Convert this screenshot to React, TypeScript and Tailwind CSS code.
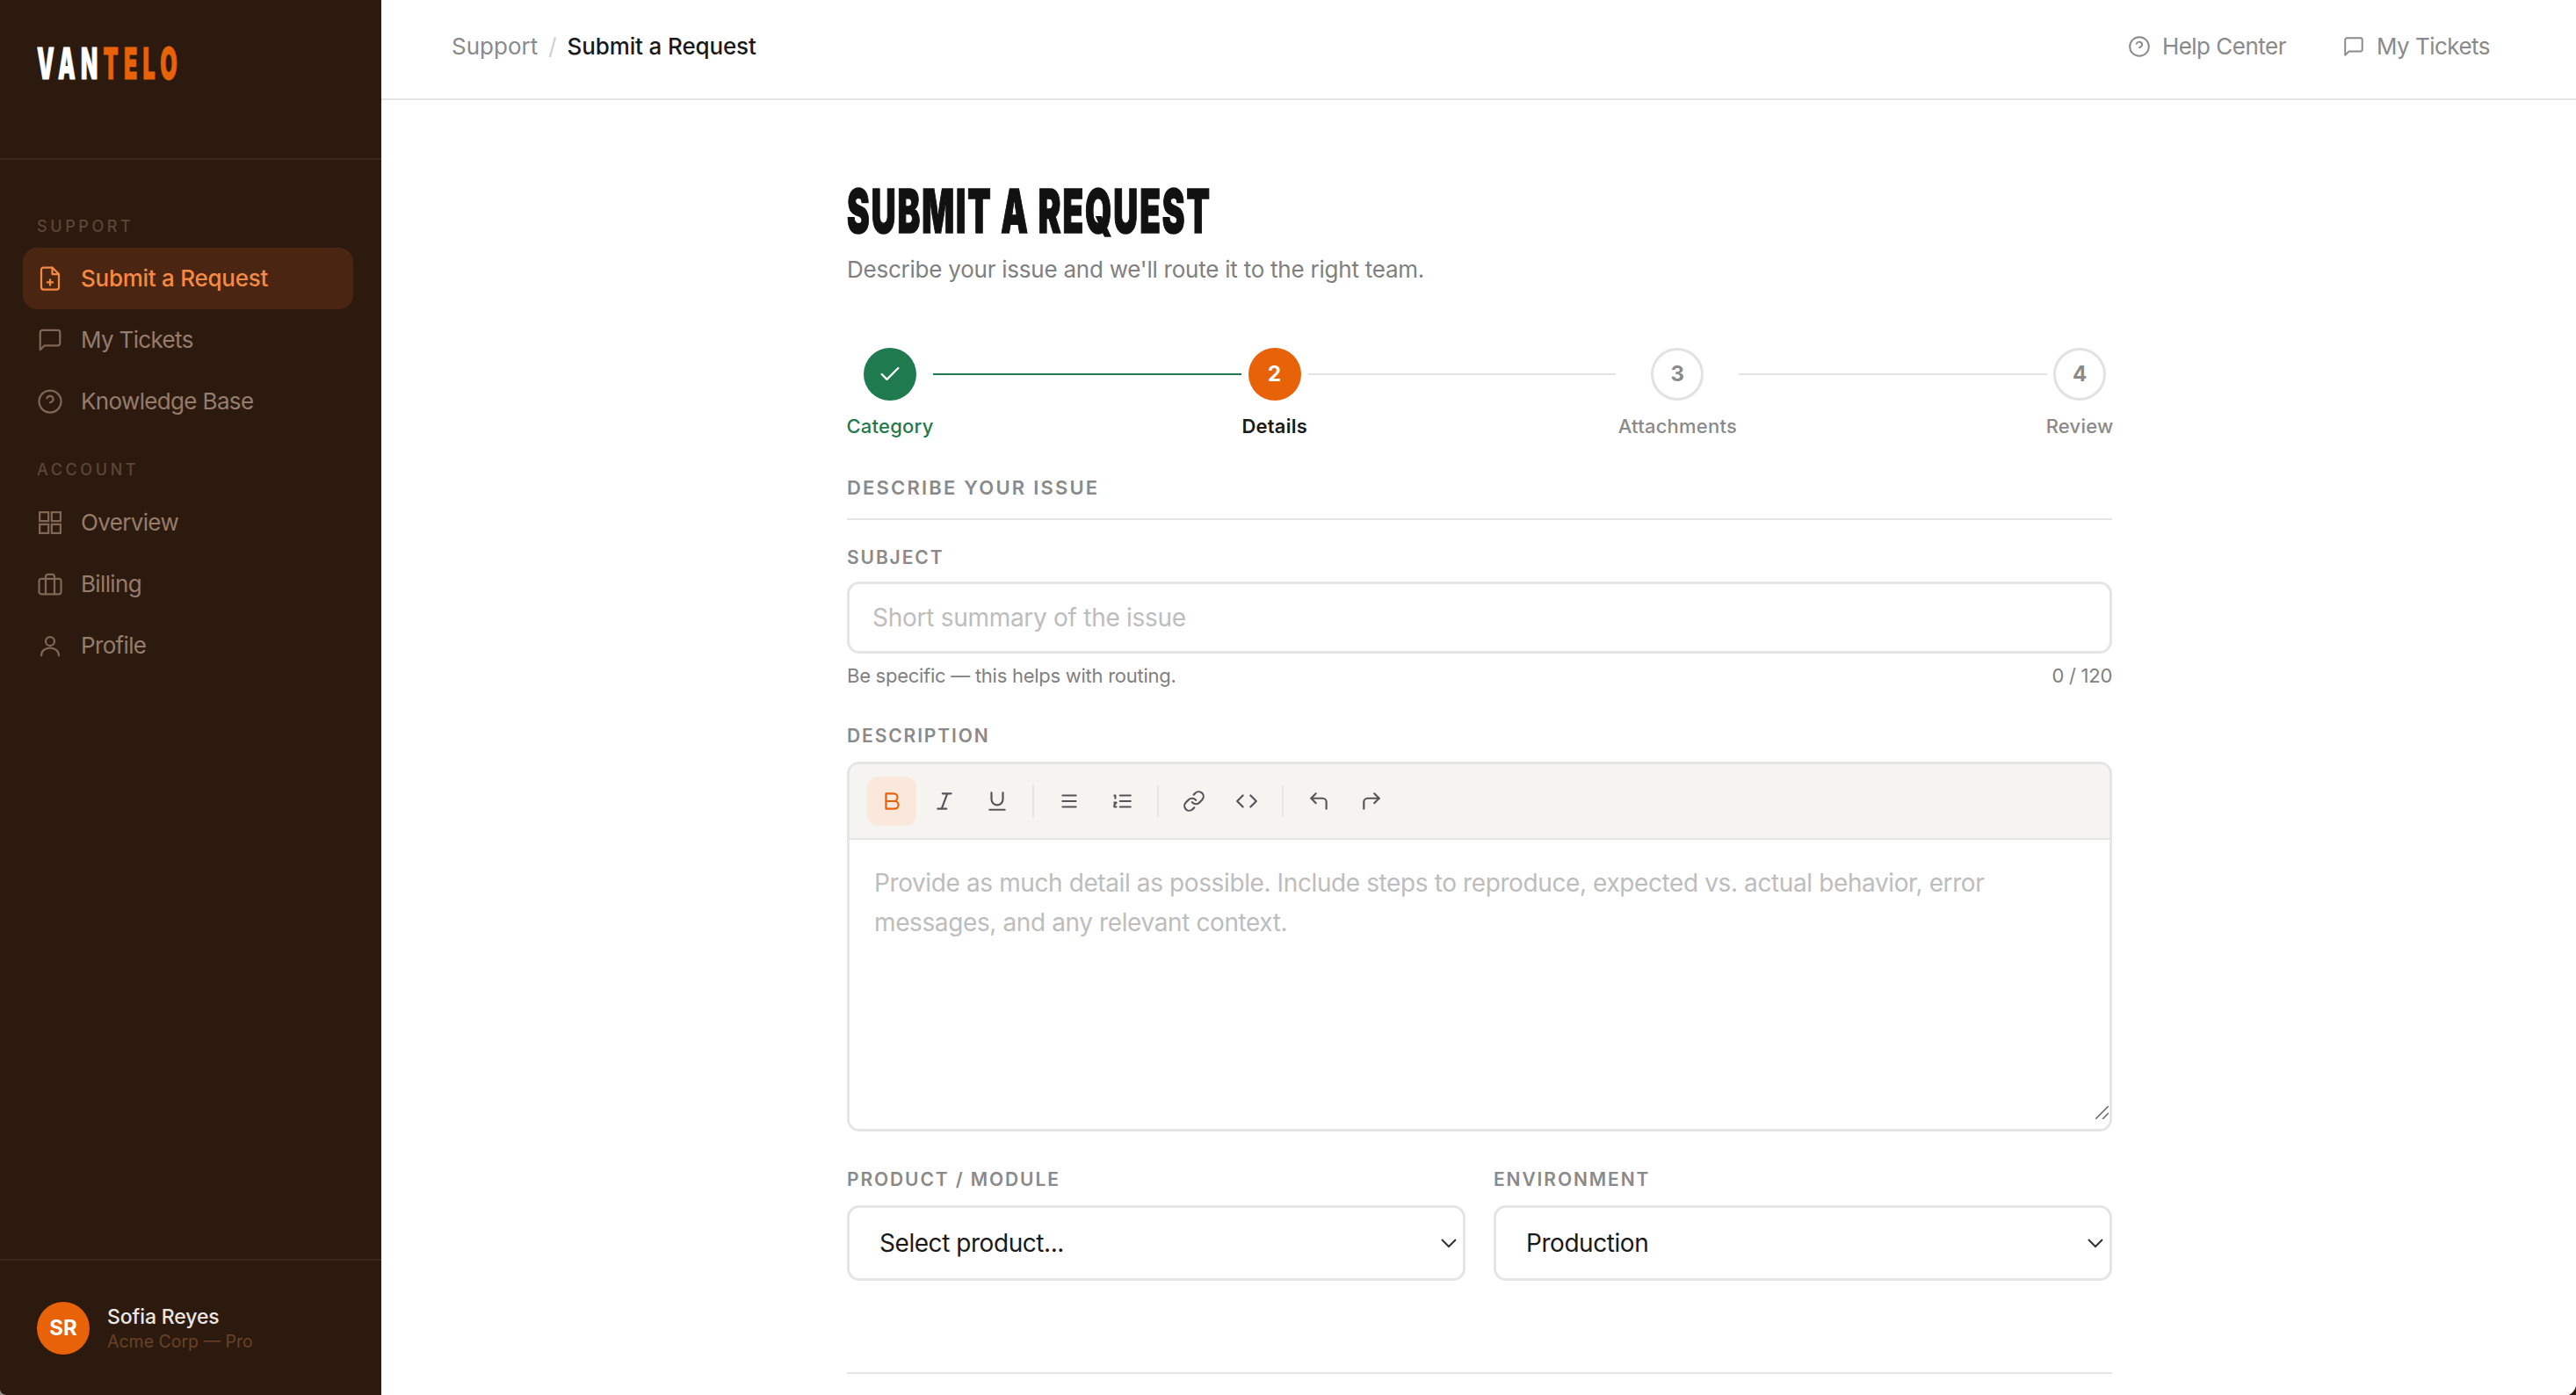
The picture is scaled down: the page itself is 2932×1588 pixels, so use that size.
import { Fragment } from 'react';
import type { ReactNode } from 'react';

const Icon = ({ size = 30, width = 1.8, className = '', children }: { size?: number; width?: number; className?: string; children: ReactNode }) => (
  <svg
    width={size}
    height={size}
    viewBox="0 0 24 24"
    fill="none"
    stroke="currentColor"
    strokeWidth={width}
    strokeLinecap="round"
    strokeLinejoin="round"
    className={`shrink-0 ${className}`}
  >
    {children}
  </svg>
);

const FilePlusGlyph = (
  <>
    <path d="M14 2H6a2 2 0 0 0-2 2v16a2 2 0 0 0 2 2h12a2 2 0 0 0 2-2V8z" />
    <path d="M14 2v6h6" />
    <path d="M12 18v-5M9.5 15.5h5" />
  </>
);
const MessageGlyph = <path d="M21 15a2 2 0 0 1-2 2H7l-4 4V5a2 2 0 0 1 2-2h14a2 2 0 0 1 2 2z" />;
const HelpGlyph = (
  <>
    <circle cx="12" cy="12" r="10" />
    <path d="M9.1 9a3 3 0 0 1 5.8 1c0 2-2.9 3-2.9 3" />
  </>
);
const GridGlyph = (
  <>
    <rect x="2.5" y="2.5" width="8" height="8" strokeLinejoin="miter" />
    <rect x="13.5" y="2.5" width="8" height="8" strokeLinejoin="miter" />
    <rect x="13.5" y="13.5" width="8" height="8" strokeLinejoin="miter" />
    <rect x="2.5" y="13.5" width="8" height="8" strokeLinejoin="miter" />
  </>
);
const BriefcaseGlyph = (
  <>
    <rect x="2" y="7" width="20" height="14" rx="2" />
    <path d="M16 21V5a2 2 0 0 0-2-2h-4a2 2 0 0 0-2 2v16" />
  </>
);
const UserGlyph = (
  <>
    <circle cx="12" cy="8" r="4" />
    <path d="M4 21c0-4.4 3.6-7 8-7s8 2.6 8 7" />
  </>
);

const NavItem = ({ glyph, label, active }: { glyph: ReactNode; label: string; active?: boolean }) => (
  <div
    className={`ml-[26px] mr-[32px] flex h-[70px] items-center gap-[20px] rounded-[16px] pl-[16px] text-[26px] ${
      active ? 'bg-[#4a2511] font-medium tracking-[-0.01em] text-[#f58a45]' : 'tracking-[-0.025em] text-[#957c6c]'
    }`}
  >
    <Icon className={active ? 'text-[#f58a45]' : 'text-[#7f6655]'}>{glyph}</Icon>
    <span className="leading-none">{label}</span>
  </div>
);

const NavLabel = ({ children, className = '' }: { children: ReactNode; className?: string }) => (
  <div className={`pl-[42px] text-[18px] font-medium uppercase leading-none tracking-[0.2em] text-[#5c4636] ${className}`}>
    {children}
  </div>
);

const Sidebar = () => (
  <aside className="flex h-full w-[434px] shrink-0 flex-col bg-[#2c1a0e]">
    <div className="h-[182px] border-b-2 border-[#3b291c] pl-[42px] pt-[47px]">
      <div className="inline-block origin-left scale-x-[0.5] whitespace-nowrap text-[50px] font-black leading-none tracking-[0.25em] [-webkit-text-stroke:1px_currentColor]">
        <span className="text-white">VAN</span>
        <span className="text-[#e8620a]">TELO</span>
      </div>
    </div>
    <NavLabel className="mt-[67px] mb-[15px]">Support</NavLabel>
    <NavItem active label="Submit a Request" glyph={FilePlusGlyph} />
    <NavItem label="My Tickets" glyph={MessageGlyph} />
    <NavItem label="Knowledge Base" glyph={HelpGlyph} />
    <NavLabel className="mt-[34px] mb-[16px]">Account</NavLabel>
    <NavItem label="Overview" glyph={GridGlyph} />
    <NavItem label="Billing" glyph={BriefcaseGlyph} />
    <NavItem label="Profile" glyph={UserGlyph} />
    <div className="mt-auto flex h-[155px] items-center gap-[20px] border-t-2 border-[#3b291c] pl-[42px]">
      <div className="flex h-[60px] w-[60px] items-center justify-center rounded-full bg-[#e8620a] text-[24px] font-bold text-white">
        SR
      </div>
      <div>
        <div className="text-[23px] font-medium leading-[30px] tracking-[-0.005em] text-[#ece6e1]">Sofia Reyes</div>
        <div className="text-[19.5px] leading-[26px] text-[#6b4126]">Acme Corp — Pro</div>
      </div>
    </div>
  </aside>
);

const TopBar = () => (
  <header className="flex h-[114px] shrink-0 items-start justify-between border-b-2 border-[#e5e5e5] pl-[80px] pr-[98px] pt-[36px] text-[26px] leading-[34px]">
    <div className="flex items-center">
      <span className="text-[#8a8a8a]">Support</span>
      <span className="mx-[12px] text-[#d0d0d0]">/</span>
      <span className="font-medium tracking-[-0.005em] text-[#1a1a1a]">Submit a Request</span>
    </div>
    <div className="flex items-center gap-[64px] tracking-[-0.02em] text-[#8a8a8a]">
      <div className="flex items-center gap-[13px]">
        <Icon size={26}>{HelpGlyph}</Icon>
        Help Center
      </div>
      <div className="flex items-center gap-[13px]">
        <Icon size={26}>{MessageGlyph}</Icon>
        My Tickets
      </div>
    </div>
  </header>
);

const steps = [
  { label: 'Category', width: 'w-[98px]', state: 'done' },
  { label: 'Details', width: 'w-[76px]', state: 'current' },
  { label: 'Attachments', width: 'w-[140px]', state: 'todo' },
  { label: 'Review', width: 'w-[74px]', state: 'todo' },
];

const Stepper = () => (
  <div className="flex items-start">
    {steps.map((step, i) => (
      <Fragment key={step.label}>
        {i > 0 && <div className={`mt-[29px] h-[2px] flex-1 ${i === 1 ? 'bg-[#1f7a4f]' : 'bg-[#e2e2e2]'}`} />}
        <div className={`flex shrink-0 flex-col items-center ${step.width}`}>
          <div
            className={`flex h-[60px] w-[60px] items-center justify-center rounded-full text-[24px] font-bold ${
              step.state === 'done'
                ? 'bg-[#1f7a4f] text-white'
                : step.state === 'current'
                  ? 'bg-[#e8620a] text-white'
                  : 'border-[3px] border-[#e2e2e2] bg-white text-[#8a8a8a]'
            }`}
          >
            {step.state === 'done' ? (
              <Icon size={28} width={2}>
                <path d="M20 6 9 17l-5-5" />
              </Icon>
            ) : (
              i + 1
            )}
          </div>
          <div
            className={`mt-[14px] whitespace-nowrap text-[22px] leading-[30px] tracking-[0.01em] ${
              step.state === 'done'
                ? 'font-medium text-[#1f7a4f]'
                : step.state === 'current'
                  ? 'font-semibold text-[#1a1a1a]'
                  : 'font-medium text-[#8a8a8a]'
            }`}
          >
            {step.label}
          </div>
        </div>
      </Fragment>
    ))}
  </div>
);

const FieldLabel = ({ children }: { children: ReactNode }) => (
  <label className="block text-[21px] font-semibold uppercase leading-[26px] tracking-[0.09em] text-[#8a8a8a]">
    {children}
  </label>
);

const ToolButton = ({ active, children }: { active?: boolean; children: ReactNode }) => (
  <button className={`flex h-[56px] w-[56px] items-center justify-center rounded-[12px] ${active ? 'bg-[#fbe8dd] text-[#e8620a]' : 'text-[#555555]'}`}>
    {children}
  </button>
);

const ToolSep = () => <div className="mx-[8px] h-[36px] w-[2px] bg-[#e5e5e5]" />;

const Toolbar = () => (
  <div className="flex h-[86px] items-center gap-[4px] border-b-2 border-[#e5e5e5] bg-[#f5f4f1] pl-[20px]">
    <ToolButton active>
      <Icon size={26} width={2}>
        <path d="M6 4h8a4 4 0 0 1 0 8H6z" />
        <path d="M6 12h9a4 4 0 0 1 0 8H6z" />
      </Icon>
    </ToolButton>
    <ToolButton>
      <Icon size={26} width={2}>
        <path d="M19 4h-9M14 20H5M15 4 9 20" />
      </Icon>
    </ToolButton>
    <ToolButton>
      <Icon size={26} width={2}>
        <path d="M6 3v7a6 6 0 0 0 12 0V3" />
        <path d="M4 21h16" />
      </Icon>
    </ToolButton>
    <ToolSep />
    <ToolButton>
      <Icon size={26} width={2}>
        <path d="M5 6h14M5 12h14M5 18h14" />
      </Icon>
    </ToolButton>
    <ToolButton>
      <Icon size={26} width={2}>
        <path d="M10 6h11M10 12h11M10 18h11M4 6h1v3M4 13.5h2L4 16v2h2" />
      </Icon>
    </ToolButton>
    <ToolSep />
    <ToolButton>
      <Icon size={26} width={2}>
        <path d="M10 13a5 5 0 0 0 7.54.54l3-3a5 5 0 0 0-7.07-7.07l-1.72 1.71" />
        <path d="M14 11a5 5 0 0 0-7.54-.54l-3 3a5 5 0 0 0 7.07 7.07l1.71-1.71" />
      </Icon>
    </ToolButton>
    <ToolButton>
      <Icon size={26} width={2}>
        <path d="m16 18 6-6-6-6M8 6l-6 6 6 6" />
      </Icon>
    </ToolButton>
    <ToolSep />
    <ToolButton>
      <Icon size={26} width={2}>
        <path d="M9 14 4 9l5-5" />
        <path d="M20 20v-7a4 4 0 0 0-4-4H4" />
      </Icon>
    </ToolButton>
    <ToolButton>
      <Icon size={26} width={2}>
        <path d="m15 14 5-5-5-5" />
        <path d="M4 20v-7a4 4 0 0 1 4-4h12" />
      </Icon>
    </ToolButton>
  </div>
);

const SelectField = ({ label, value, id }: { label: string; value: string; id: string }) => (
  <div>
    <FieldLabel>{label}</FieldLabel>
    <div className="relative mt-[16px]">
      <select
        id={id}
        defaultValue={value}
        className="block h-[86px] w-full appearance-none rounded-[14px] border-[3px] border-[#e5e5e5] bg-white pl-[34px] text-[28px] tracking-[-0.016em] text-[#1a1a1a] outline-none"
      >
        <option value={value}>{value}</option>
      </select>
      <svg width="20" height="12" viewBox="0 0 20 12" fill="none" stroke="#333333" strokeWidth="2" className="pointer-events-none absolute right-[9px] top-[37px]">
        <path d="m2 2 8 8 8-8" />
      </svg>
    </div>
  </div>
);

const RequestForm = () => (
  <div className="ml-[530px] w-[1440px] pt-[91px]">
    <h1 className="origin-left scale-x-[0.56] whitespace-nowrap text-[69px] font-black uppercase leading-[70px] tracking-[0.05em] text-[#111111] [-webkit-text-stroke:1.5px_#111111]">
      Submit a Request
    </h1>
    <p className="mt-[14px] text-[26px] leading-[36px] tracking-[-0.009em] text-[#808080]">Describe your issue and we'll route it to the right team.</p>
    <div className="mt-[71px]">
      <Stepper />
    </div>
    <div className="mt-[42px] border-b-2 border-[#e5e5e5] pb-[22px] text-[22px] font-semibold uppercase leading-[26px] tracking-[0.1em] text-[#8a8a8a]">
      Describe your issue
    </div>
    <div className="mt-[30px]">
      <FieldLabel>Subject</FieldLabel>
      <input
        placeholder="Short summary of the issue"
        className="mt-[14px] block h-[82px] w-full rounded-[14px] border-[3px] border-[#e5e5e5] bg-white px-[26px] text-[28px] tracking-[-0.01em] text-[#1a1a1a] outline-none placeholder:text-[#bdbdbd]"
      />
      <div className="mt-[10px] flex justify-between text-[22px] leading-[30px] tracking-[-0.012em] text-[#808080]">
        <span>Be specific — this helps with routing.</span>
        <span>0 / 120</span>
      </div>
    </div>
    <div className="mt-[41px]">
      <FieldLabel>Description</FieldLabel>
      <div className="relative mt-[16px] overflow-hidden rounded-[14px] border-[3px] border-[#e5e5e5]">
        <Toolbar />
        <textarea
          placeholder="Provide as much detail as possible. Include steps to reproduce, expected vs. actual behavior, error messages, and any relevant context."
          className="block h-[329px] w-full resize-none bg-white px-[28px] py-[27px] text-[28px] leading-[45px] tracking-[-0.014em] text-[#1a1a1a] outline-none placeholder:text-[#bdbdbd]"
        />
        <svg width="15" height="15" viewBox="0 0 15 15" fill="none" stroke="#666666" strokeWidth="1.5" className="pointer-events-none absolute bottom-[11px] right-[1px]">
          <path d="M0 15 15 0M8 15l7-7" />
        </svg>
      </div>
    </div>
    <div className="mt-[42px] grid grid-cols-2 gap-[32px]">
      <SelectField id="product" label="Product / Module" value="Select product..." />
      <SelectField id="environment" label="Environment" value="Production" />
    </div>
    <div className="mt-[104px] border-t-2 border-[#e5e5e5]" />
  </div>
);

export default function App() {
  return (
    <div className="relative flex h-screen overflow-hidden bg-white font-['Inter','Liberation_Sans',sans-serif]">
      <Sidebar />
      <main className="flex min-w-0 flex-1 flex-col">
        <TopBar />
        <RequestForm />
      </main>
      <svg width="7" height="6" className="absolute bottom-0 left-0">
        <path d="M0 0Q1 5 7 6H0z" fill="#8f8a86" />
      </svg>
      <svg width="8" height="10" className="absolute bottom-0 right-0">
        <path d="M8 0V10H0Q6 7 8 0z" fill="#2c1a0e" />
      </svg>
    </div>
  );
}
